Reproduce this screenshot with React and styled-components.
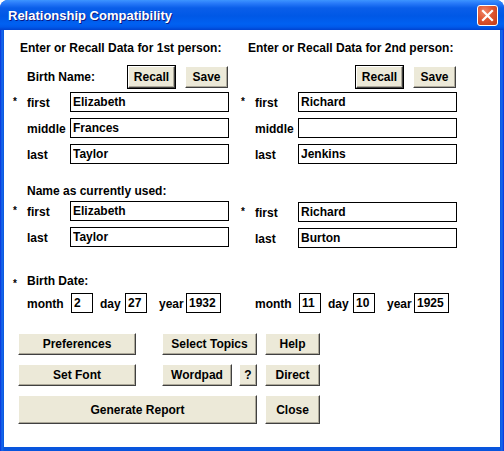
import React from "react";
import styled, { createGlobalStyle } from "styled-components";

const GlobalStyle = createGlobalStyle`
  html, body {
    margin: 0;
    padding: 0;
    background: #ffffff;
  }
  body {
    font-family: "Liberation Sans", Arial, sans-serif;
  }
`;

const people = [
  {
    heading: "Enter or Recall Data for 1st person:",
    showBirthLabel: true,
    birth: { first: "Elizabeth", middle: "Frances", last: "Taylor" },
    current: { first: "Elizabeth", last: "Taylor" },
    date: { month: "2", day: "27", year: "1932" },
  },
  {
    heading: "Enter or Recall Data for 2nd person:",
    showBirthLabel: false,
    birth: { first: "Richard", middle: "", last: "Jenkins" },
    current: { first: "Richard", last: "Burton" },
    date: { month: "11", day: "10", year: "1925" },
  },
];

export default function App() {
  return (
    <>
      <GlobalStyle />
      <Window>
        <TitleBar>
          <Title>Relationship Compatibility</Title>
          <CloseBox aria-label="Close">
            <svg width="13" height="13" viewBox="0 0 13 13">
              <path
                d="M2 2 L11 11 M11 2 L2 11"
                stroke="#ffffff"
                strokeWidth="2.2"
                strokeLinecap="square"
              />
            </svg>
          </CloseBox>
        </TitleBar>
        <Body>
          <Columns>
            {people.map((person, i) => (
              <Person key={i} person={person} />
            ))}
          </Columns>
          <ButtonGrid>
            <Button>Preferences</Button>
            <Button $col="3">Select Topics</Button>
            <Button $col="5">Help</Button>
            <Button>Set Font</Button>
            <MiddlePair>
              <Button $width="70px">Wordpad</Button>
              <Button $width="18px">?</Button>
            </MiddlePair>
            <Button $col="5">Direct</Button>
            <Button $col="1 / 4" $tall>
              Generate Report
            </Button>
            <Button $col="5" $tall>
              Close
            </Button>
          </ButtonGrid>
        </Body>
      </Window>
    </>
  );
}

function Person({ person }) {
  const { heading, showBirthLabel, birth, current, date } = person;
  return (
    <Column>
      <Heading>{heading}</Heading>
      <NameHeader>
        <SectionLabel>{showBirthLabel ? "Birth Name:" : ""}</SectionLabel>
        <Button $width="47px" $default>
          Recall
        </Button>
        <Button $width="43px">Save</Button>
      </NameHeader>
      <Fields>
        <Field required label="first" value={birth.first} />
        <Field label="middle" value={birth.middle} />
        <Field label="last" value={birth.last} />
      </Fields>
      <SectionLabel $gap="20px">
        {showBirthLabel ? "Name as currently used:" : "\u00a0"}
      </SectionLabel>
      <Fields $gap="3px">
        <Field required label="first" value={current.first} />
        <Field label="last" value={current.last} />
      </Fields>
      <DateHeading>
        <Star>{showBirthLabel ? "*" : ""}</Star>
        {showBirthLabel ? "Birth Date:" : "\u00a0"}
      </DateHeading>
      <DateRow>
        <Star />
        <DateLabel $width="44px">month</DateLabel>
        <TextBox $width="22px" value={date.month} readOnly />
        <DateLabel $width="25px" $gap="7px">
          day
        </DateLabel>
        <TextBox $width="22px" value={date.day} readOnly />
        <DateLabel $width="27px" $gap="12px">
          year
        </DateLabel>
        <TextBox $width="35px" value={date.year} readOnly />
      </DateRow>
    </Column>
  );
}

function Field({ required, label, value }) {
  return (
    <FieldRow>
      <Star>{required ? "*" : ""}</Star>
      <FieldLabel>{label}</FieldLabel>
      <TextBox $width="159px" value={value} readOnly />
    </FieldRow>
  );
}

const Window = styled.div`
  width: 504px;
  height: 451px;
  box-sizing: border-box;
  display: flex;
  flex-direction: column;
  background: linear-gradient(to right, #0831d9 0, #166aee 2px, #0855dd 4px, #0855dd 500px, #166aee 502px, #0831d9 504px);
  border-radius: 8px 8px 0 0;
  overflow: hidden;
`;

const TitleBar = styled.div`
  height: 30px;
  flex: none;
  display: flex;
  align-items: center;
  justify-content: space-between;
  padding: 0 6px 0 8px;
  background: linear-gradient(
    to bottom,
    #3d95ff 0,
    #2a7cfa 3px,
    #0a5ee9 8px,
    #0058e6 16px,
    #0061f2 24px,
    #0059ea 27px,
    #0042cf 30px
  );
`;

const Title = styled.span`
  color: #ffffff;
  font-size: 13px;
  font-weight: bold;
  text-shadow: 1px 1px #0a1883;
`;

const CloseBox = styled.div`
  width: 21px;
  height: 21px;
  box-sizing: border-box;
  display: flex;
  align-items: center;
  justify-content: center;
  border: 1px solid #ffffff;
  border-radius: 3px;
  background: radial-gradient(circle at 35% 30%, #f0876a 0%, #df5530 45%, #c23b15 100%);
`;

const Body = styled.div`
  flex: 1;
  margin: 0 4px 4px 4px;
  background: #ffffff;
  display: flex;
  flex-direction: column;
  padding: 11px 0 0 9px;
`;

const Columns = styled.div`
  display: grid;
  grid-template-columns: 215px 215px;
  column-gap: 13px;
`;

const Column = styled.div`
  display: flex;
  flex-direction: column;
`;

const Text = styled.span`
  font-size: 12px;
  font-weight: bold;
  color: #000000;
  line-height: 14px;
  white-space: nowrap;
`;

const Heading = styled(Text)`
  padding-left: 7px;
`;

const NameHeader = styled.div`
  display: flex;
  align-items: center;
  gap: 10px;
  height: 22px;
  margin-top: 11px;
  padding-left: 14px;
`;

const SectionLabel = styled(Text)`
  display: block;
  flex: 1;
  margin-top: ${(p) => p.$gap || "0"};
  padding-left: ${(p) => (p.$gap ? "14px" : "0")};
`;

const Fields = styled.div`
  display: flex;
  flex-direction: column;
  gap: 6px;
  margin-top: ${(p) => p.$gap || "4px"};
`;

const FieldRow = styled.div`
  display: flex;
  align-items: center;
  height: 20px;
`;

const Star = styled(Text)`
  display: inline-block;
  width: 14px;
  flex: none;
  font-size: 10px;
  line-height: 10px;
  align-self: flex-start;
  padding-top: ${(p) => (p.children ? "5px" : "0")};
`;

const FieldLabel = styled(Text)`
  width: 43px;
  flex: none;
  padding-top: 2px;
`;

const TextBox = styled.input`
  width: ${(p) => p.$width};
  height: 20px;
  box-sizing: border-box;
  flex: none;
  margin: 0;
  padding: 0 2px;
  border: 1px solid #000000;
  background: #ffffff;
  font-family: "Liberation Sans", Arial, sans-serif;
  font-size: 12px;
  font-weight: bold;
  color: #000000;
  outline: none;
`;

const DateHeading = styled(Text)`
  display: flex;
  margin-top: 27px;
`;

const DateRow = styled.div`
  display: flex;
  align-items: center;
  height: 21px;
  margin-top: 3px;
`;

const DateLabel = styled(Text)`
  width: ${(p) => p.$width};
  flex: none;
  margin-left: ${(p) => p.$gap || "0"};
  padding-top: 2px;
`;

const ButtonGrid = styled.div`
  display: grid;
  grid-template-columns: 118px 26px 95px 8px 55px;
  grid-template-rows: 22px 22px 29px;
  row-gap: 9px;
  margin: 20px 0 0 5px;
`;

const MiddlePair = styled.div`
  grid-column: 3;
  display: flex;
  justify-content: space-between;
`;

const Button = styled.div`
  grid-column: ${(p) => p.$col || "auto"};
  width: ${(p) => p.$width || "auto"};
  height: 22px;
  box-sizing: border-box;
  display: flex;
  align-items: center;
  justify-content: center;
  background: #ece9d8;
  border-style: solid;
  border-width: 1px;
  border-color: #ffffff #404040 #404040 #ffffff;
  box-shadow: inset -1px -1px #aca899;
  outline: ${(p) => (p.$default ? "1px solid #000000" : "none")};
  font-size: 12px;
  font-weight: bold;
  color: #000000;
  white-space: nowrap;
  ${(p) => p.$tall && "height: 29px;"}
`;
